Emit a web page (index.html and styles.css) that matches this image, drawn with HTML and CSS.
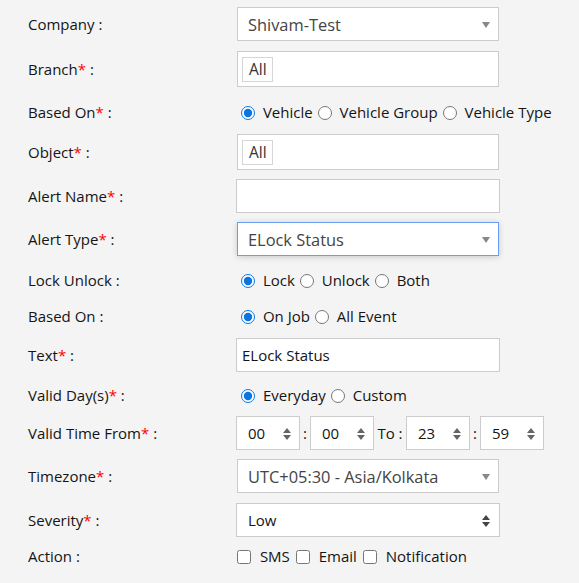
FILE: index.html
```html
<!DOCTYPE html>
<html>
<head>
<meta charset="utf-8">
<link rel="stylesheet" href="styles.css">
</head>
<body>
<div class="form">
  <div class="lbl">Company :</div>
  <div class="ctl"><div class="box sel inset">Shivam-Test<span class="caret"></span></div></div>

  <div class="lbl">Branch<span class="req">*</span> :</div>
  <div class="ctl"><div class="box tags inset"><span class="tag">All</span></div></div>

  <div class="lbl">Based On<span class="req">*</span> :</div>
  <div class="opts"><input type="radio" name="b1" checked> Vehicle<input type="radio" name="b1"> Vehicle Group<input type="radio" name="b1"> Vehicle Type</div>

  <div class="lbl">Object<span class="req">*</span> :</div>
  <div class="ctl"><div class="box tags inset"><span class="tag">All</span></div></div>

  <div class="lbl">Alert Name<span class="req">*</span> :</div>
  <div class="ctl"><div class="box txt"></div></div>

  <div class="lbl">Alert Type<span class="req">*</span> :</div>
  <div class="ctl"><div class="box sel inset focus">ELock Status<span class="caret"></span></div></div>

  <div class="lbl">Lock Unlock :</div>
  <div class="opts"><input type="radio" name="b2" checked> Lock<input type="radio" name="b2"> Unlock<input type="radio" name="b2"> Both</div>

  <div class="lbl">Based On :</div>
  <div class="opts"><input type="radio" name="b3" checked> On Job<input type="radio" name="b3"> All Event</div>

  <div class="lbl">Text<span class="req">*</span> :</div>
  <div class="ctl"><div class="box txt val">ELock Status</div></div>

  <div class="lbl">Valid Day(s)<span class="req">*</span> :</div>
  <div class="opts"><input type="radio" name="b4" checked> Everyday<input type="radio" name="b4"> Custom</div>

  <div class="lbl">Valid Time From<span class="req">*</span> :</div>
  <div class="ctl times">
    <div class="box num">00<svg class="spin" viewBox="0 0 8 12" width="8" height="12"><path d="M0 5 L4 0 L8 5Z M0 7 L4 12 L8 7Z" fill="#666"/></svg></div>
    <span class="sep">:</span>
    <div class="box num">00<svg class="spin" viewBox="0 0 8 12" width="8" height="12"><path d="M0 5 L4 0 L8 5Z M0 7 L4 12 L8 7Z" fill="#666"/></svg></div>
    <span class="to">To :</span>
    <div class="box num">23<svg class="spin" viewBox="0 0 8 12" width="8" height="12"><path d="M0 5 L4 0 L8 5Z M0 7 L4 12 L8 7Z" fill="#666"/></svg></div>
    <span class="sep">:</span>
    <div class="box num">59<svg class="spin" viewBox="0 0 8 12" width="8" height="12"><path d="M0 5 L4 0 L8 5Z M0 7 L4 12 L8 7Z" fill="#666"/></svg></div>
  </div>

  <div class="lbl">Timezone<span class="req">*</span> :</div>
  <div class="ctl"><div class="box sel inset">UTC+05:30 - Asia/Kolkata<span class="caret"></span></div></div>

  <div class="lbl">Severity<span class="req">*</span> :</div>
  <div class="ctl"><div class="box txt low">Low<svg class="updown" viewBox="0 0 8 12" width="8" height="12"><path d="M0 5 L4 0 L8 5Z M0 7 L4 12 L8 7Z" fill="#444"/></svg></div></div>

  <div class="lbl">Action :</div>
  <div class="opts"><input type="checkbox" class="cb"> SMS<input type="checkbox" class="cb"> Email<input type="checkbox" class="cb"> Notification</div>
</div>
</body>
</html>
```

FILE: styles.css
```css
html, body {
  margin: 0;
  padding: 0;
  background: #f4f4f4;
}
body {
  font-family: "Open Sans", "DejaVu Sans", sans-serif;
  font-size: 15px;
  color: #151515;
}
.form {
  display: grid;
  grid-template-columns: 208px 343px;
  grid-template-rows: 48px 42px 44px 36px 52px 34px 48px 24px 54px 26px 50px 36px 52px 20px;
  padding-left: 28px;
  align-items: center;
}
.lbl {
  white-space: nowrap;
  line-height: 20px;
}
.req {
  color: #f00;
}
.ctl {
  display: flex;
  align-items: center;
}
.box {
  box-sizing: border-box;
  background: #fff;
  border: 1px solid #ccc;
  height: 34px;
  width: 264px;
  position: relative;
  display: flex;
  align-items: center;
  white-space: nowrap;
}
.inset {
  margin-left: 1px;
  width: 262px;
}
.sel {
  padding-left: 10px;
  color: #444;
  font-size: 16.4px;
}
.tags {
  height: 36px;
  padding-left: 4px;
}
.tag {
  box-sizing: border-box;
  border: 1px solid #d6d6d6;
  height: 25px;
  width: 31px;
  padding-left: 6px;
  line-height: 23px;
  color: #333;
  font-size: 15.5px;
}
.focus {
  border-color: #6b9ef2;
  box-shadow: 0 1px 6px rgba(0, 0, 0, 0.18);
}
.caret {
  position: absolute;
  right: 8px;
  top: 14px;
  width: 0;
  height: 0;
  border-left: 4px solid transparent;
  border-right: 4px solid transparent;
  border-top: 6px solid #888;
}
.val {
  padding-left: 5px;
}
.low {
  padding-left: 11px;
}
.updown {
  position: absolute;
  right: 9px;
  top: 11px;
}
.opts {
  white-space: nowrap;
  line-height: 24px;
}
.opts input[type="radio"] {
  width: 14px;
  height: 14px;
  margin: 0 4px 0 5px;
  accent-color: #0a75e0;
  vertical-align: -2px;
}
.opts input.cb {
  width: 14px;
  height: 14px;
  margin: 0 5px 0 6px;
  vertical-align: -2px;
}
.opts input.cb:first-child {
  margin-left: 1px;
}
.times .num {
  width: 64px;
  padding-left: 11px;
}
.spin {
  position: absolute;
  right: 8px;
  top: 11px;
}
.sep {
  width: 10px;
  text-align: center;
}
.to {
  width: 32px;
  text-align: center;
}
```
